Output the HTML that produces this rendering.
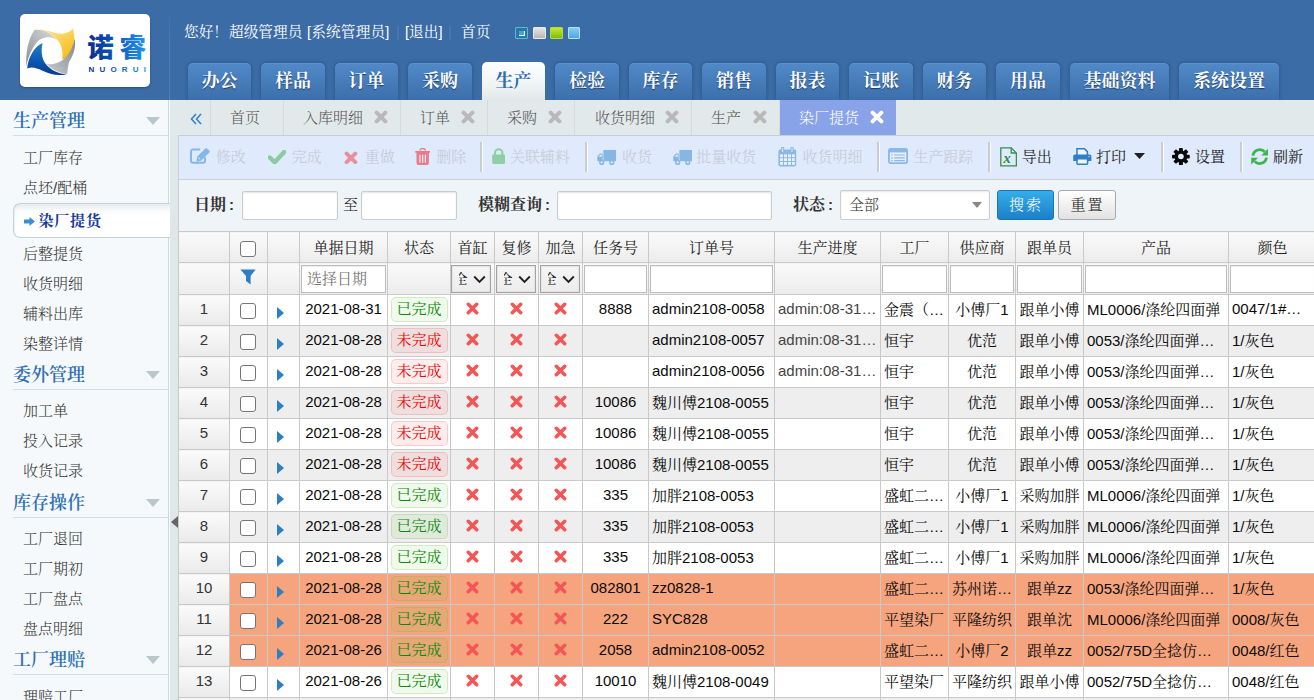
<!DOCTYPE html>
<html lang="zh-CN">
<head>
<meta charset="utf-8">
<title>染厂提货</title>
<style>
*{box-sizing:border-box;margin:0;padding:0}
html,body{width:1314px;height:700px;overflow:hidden;background:#f5f9fb}
body{position:relative;font-family:"Liberation Sans","Noto Serif CJK SC",serif;font-size:15px;color:#222;font-weight:300}
.abs{position:absolute}
/* ---------- header ---------- */
#hd{position:absolute;left:0;top:0;width:1314px;height:100px;background:#3b6ca5}
#logo{position:absolute;left:20px;top:14px;width:130px;height:73px;background:#fff;border-radius:5px;box-shadow:0 1px 2px rgba(20,50,90,.5)}
#vsep{position:absolute;left:169px;top:8px;width:1px;height:92px;background:linear-gradient(#3b6ca5,#4f7db2 40%,#4f7db2)}
#hello span{position:absolute;top:22px;height:20px;line-height:20px;color:#fff;white-space:nowrap;font-size:14.67px;font-weight:400}
#hello span.s{color:#4f7fb6}
.sk{position:absolute;top:27px;width:13px;height:12px;border:1px solid #7fb2dc;border-radius:1px}
.nt{position:absolute;top:63px;height:37px;line-height:37px;text-align:center;color:#fff;font-weight:bold;font-size:18px;
 border-radius:5px 5px 0 0;background:linear-gradient(#5189c8,#3c6faa);box-shadow:0 0 3px 1px rgba(38,80,135,.6),inset 0 1px 0 rgba(255,255,255,.08);text-shadow:0 1px 1px rgba(10,40,80,.8);white-space:nowrap;font-family:"Liberation Sans","Noto Serif CJK SC",serif}
.nt.on{top:62px;height:38px;line-height:39px;background:linear-gradient(#ffffff,#f3f6f7 50%,#e2e9ea);color:#2d6db5;text-shadow:none;box-shadow:none}
/* ---------- sidebar ---------- */
#sb{position:absolute;left:0;top:100px;width:170px;height:600px;background:#f5f9fb;overflow:hidden}
#sb:before{content:"";position:absolute;left:168px;top:0;width:1px;height:600px;background:#c9d7de}
#sb:after{content:"";position:absolute;left:169px;top:0;width:1px;height:600px;background:#fbfdfe}
#split{position:absolute;left:170px;top:100px;width:8px;height:600px;background:#dfe7e9}
.sh{position:relative;margin:1px 2px 0 13px;height:30px;line-height:31px;border-bottom:1px solid #d3dfe8;color:#2f6fb6;font-weight:600;font-size:18px;white-space:nowrap}
.sh:after{content:"";position:absolute;left:133px;top:11px;border:7px solid transparent;border-top:8px solid #b7c7cc;border-bottom:0}
.sl{padding-top:6px;list-style:none}
.sl.p7{padding-top:7px}
.sl li{height:30px;line-height:29px;padding-left:23px;color:#333;white-space:nowrap}
.sl li.on{height:35px;line-height:34px;margin:0 0 1px 13px;padding-left:10px;border:1px solid #c4d3dc;border-right:0;border-radius:7px 0 0 7px;background:linear-gradient(#e7ecef,#f7f9fa 6px,#fff 11px);position:relative;z-index:2;
 box-shadow:inset 1px 0 1px rgba(150,170,185,.2);color:#1b3a9c;font-weight:bold;letter-spacing:.8px}
/* ---------- tab bar ---------- */
#tb{position:absolute;left:179px;top:100px;width:1135px;height:35px;background:#e2e9ea}
.tab{position:absolute;top:0;height:35px;line-height:35px;color:#555;white-space:nowrap;border-right:1px solid #d6dbdb}
.tab b{position:absolute;top:10px;width:14px;height:14px}
.tab.on{background:#89a3e8;color:#fff;border-right:0}

/* ---------- main ---------- */
.tab b svg{display:block}
#tool{position:absolute;left:178px;top:135px;width:1136px;height:45px;background:#dfeafc;border-top:1px solid #c5cfd6;border-bottom:1px solid #cfcfcf;border-left:1px solid #c5cfd6}
.ti i{position:absolute;line-height:0}
.ti i svg{display:block}
.ti em{position:absolute;top:11px;line-height:20px;font-style:normal;white-space:nowrap;color:#222;font-weight:400}
.ti.dis em{font-weight:300}
.ti.dis i{opacity:.55}
.ti.dis em{color:#c3c9d3}
.tsep{position:absolute;top:6px;width:3px;height:30px;background:linear-gradient(90deg,#c9cdd3 0,#c9cdd3 1.6px,#fafcff 1.6px)}
#srch{position:absolute;left:178px;top:180px;width:1136px;height:51px;background:#eff4f9;border-left:1px solid #c5cfd6}
#srch label{position:absolute;top:15px;line-height:20px;font-weight:bold;font-size:16px;color:#333;white-space:nowrap}
#srch label u{text-decoration:none;margin-left:3px;font-size:15px}
.inp{position:absolute;top:11px;height:29px;background:#fff;border:1px solid #ccc;border-radius:2px;box-shadow:inset 0 1px 2px rgba(0,0,0,.1)}
.btn{position:absolute;top:10px;height:30px;line-height:28px;text-align:center;border-radius:3px;letter-spacing:2px;padding-left:1px;white-space:nowrap}
.b1{background:linear-gradient(#35aeea,#1c7fc8);border:1px solid #1b76b8;color:#fff}
.b2{background:linear-gradient(#ffffff,#e2e2e2);border:1px solid #a9a9a9;color:#222}
#grid{position:absolute;left:178px;top:231px;width:1136px;height:469px;overflow:hidden;background:#fff}
#grid table{border-collapse:collapse;table-layout:fixed;width:1198px}
#grid th,#grid td{border:1px solid #c9c9c9;padding:0 0 2px 0;text-align:center;white-space:nowrap;overflow:hidden;font-weight:400;vertical-align:middle;color:#0a0a0a}
#grid tr.h th{height:31px;background:linear-gradient(#fafafa,#ececec);color:#222}
#grid tr.f th{height:32px;padding-bottom:1px;background:linear-gradient(#fafafa,#ececec)}
#grid td{height:31px;padding-bottom:4px}
#grid td.l{text-align:left;padding-left:3px}
#grid td.g{color:#444}
#grid td.a{text-align:left;padding-left:9px}
#grid td.n{background:linear-gradient(#fbfbfb,#eaeaea) !important;color:#333}
tr.ev td{background:#eeeeee}
tr.hl td{background:#f5a47e}
.ck{display:inline-block;width:16px;height:16px;border:1.5px solid #767676;border-radius:3px;background:#fff;vertical-align:middle;position:relative;top:1.5px;left:-1px}
#grid tr.h .ck{top:1.5px}
.fi{display:block;margin:1px 1px 0 1px;height:28px;line-height:26px;border:1px solid #bdbdbd;background:#fff;box-shadow:inset 0 1px 1px rgba(0,0,0,.08)}
.fs{display:block;position:relative;margin:1px 0 0 0;width:40px;height:28px;border:1px solid #a3a3a3;background:linear-gradient(#f6f6f6,#ececec);box-shadow:inset 0 0 0 1px #e4e4e4}
.bd{position:relative;top:1.5px;display:inline-block;width:57px;height:25px;line-height:22px;border-radius:5px;border:1px solid;text-align:center;vertical-align:middle}
.bd.ok{color:#078a07;background:rgba(103,194,58,.1);border-color:rgba(103,194,58,.25)}
.bd.no{color:#f40000;background:rgba(245,108,108,.12);border-color:rgba(245,108,108,.28)}
</style>
</head>
<body>
<!-- HEADER -->
<div id="hd">
  <div id="logo">
    <svg width="130" height="73" viewBox="0 0 130 73">
      <defs>
        <linearGradient id="gy" x1="0" y1="0" x2="1" y2="1"><stop offset="0" stop-color="#fde9a8"/><stop offset=".55" stop-color="#fbd050"/><stop offset="1" stop-color="#f6b400"/></linearGradient>
        <linearGradient id="gb" x1="0" y1="0" x2="0" y2="1"><stop offset="0" stop-color="#1f7fd2"/><stop offset=".6" stop-color="#0b55ad"/><stop offset="1" stop-color="#073a8e"/></linearGradient>
        <linearGradient id="gg1" x1="0" y1="1" x2="1" y2="0"><stop offset="0" stop-color="#8b8f94"/><stop offset="1" stop-color="#d9dbde"/></linearGradient><linearGradient id="gg2" x1="0" y1="1" x2="1" y2="0"><stop offset="0" stop-color="#c9cccf"/><stop offset="1" stop-color="#84888d"/></linearGradient>
        <linearGradient id="gt" x1="0" y1="0" x2="1" y2="0"><stop offset="0" stop-color="#0d2b8e"/><stop offset=".5" stop-color="#0b5fc2"/><stop offset="1" stop-color="#2aa0ee"/></linearGradient>
      </defs>
      <path d="M6.3 52.5 C5.6 40 8 25 14.6 15.8 C22 15.2 30.5 18 36.8 25.8 C30 22 22.5 22.5 17.2 28 C12 34 8 43 6.3 52.5Z" fill="url(#gg1)"/>
      <path d="M14 14.6 C24 14.4 36 21 44 19.6 C48 19 51 17 52.7 14.8 C55.2 22 55 30.5 50 40 C48 43.2 45 45 42.2 45.6 C43.2 38 42 31 37 25.6 C31 18.5 22 15.4 14 14.6Z" fill="url(#gy)"/>
      <path d="M54.6 24.5 C56.2 32 54 40.5 49 48 C48 52 47.5 56 47.2 60.2 C40 59.2 32 56 26.6 50 C32 51 38 49.4 43 45.8 C49 41.2 53.2 33 54.6 24.5Z" fill="url(#gg2)"/>
      <path d="M22.6 29 C14 33 8.3 43 7.2 54.4 C12 52.4 17 54 22 56.6 C29 60.2 38 62.2 46.4 60.4 C38 59.6 30 56 25 49 C21.4 43.5 21 36 22.6 29Z" fill="url(#gb)"/>
      <text x="67.3" y="43.2" font-size="26.5" font-weight="900" fill="url(#gt)" font-family="'Liberation Sans','Noto Sans CJK SC',sans-serif" letter-spacing="5.6">诺睿</text>
      <text x="68.6" y="57.5" font-size="8" font-weight="bold" fill="url(#gt)" font-family="'Liberation Sans',sans-serif" letter-spacing="5.15">NUORUI</text>
    </svg>
  </div>
  <div id="vsep"></div>
  <div id="hello"><span style="left:184px">您好！</span><span style="left:229px">超级管理员</span><span style="left:307px;letter-spacing:.15px">[系统管理员]</span><span class="s" style="left:396px">|</span><span style="left:405px">[退出]</span><span class="s" style="left:448px">|</span><span style="left:461px">首页</span></div>
  <div class="sk" style="left:515px;background:#217ba7;border-color:#6cb2cf"><span style="position:absolute;left:3px;top:3px;width:6px;height:5px;background:#4aa3d6;border-right:1px solid #fff;border-bottom:1px solid #fff"></span></div>
  <div class="sk" style="left:533px;background:linear-gradient(#e6e6e6,#b9b9b9);border-color:#ecebe8"></div>
  <div class="sk" style="left:550px;background:linear-gradient(#c6ea2c,#7dbd0a);border-color:#b4dc3a"></div>
  <div class="sk" style="left:568px;width:12px;background:linear-gradient(#82cdf6,#4ea6e6);border-color:#b5e2fa"></div>

  <div class="nt" style="left:188px;width:63px">办公</div>
  <div class="nt" style="left:261px;width:64px">样品</div>
  <div class="nt" style="left:335px;width:63px">订单</div>
  <div class="nt" style="left:408px;width:64px">采购</div>
  <div class="nt on" style="left:482px;width:63px">生产</div>
  <div class="nt" style="left:555px;width:64px">检验</div>
  <div class="nt" style="left:629px;width:63px">库存</div>
  <div class="nt" style="left:702px;width:64px">销售</div>
  <div class="nt" style="left:776px;width:63px">报表</div>
  <div class="nt" style="left:849px;width:64px">记账</div>
  <div class="nt" style="left:923px;width:63px">财务</div>
  <div class="nt" style="left:996px;width:64px">用品</div>
  <div class="nt" style="left:1070px;width:99px">基础资料</div>
  <div class="nt" style="left:1179px;width:100px">系统设置</div>
</div>

<!-- SIDEBAR -->
<div id="sb">
  <div class="sh" style="margin-top:6px">生产管理</div>
  <ul class="sl p7">
    <li>工厂库存</li><li>点坯/配桶</li>
    <li class="on"><svg width="11" height="9" viewBox="0 0 11 9" style="margin-right:3.5px;vertical-align:0"><path d="M0 2.5h5.5V0L11 4.5 5.5 9V6.5H0z" fill="#3d8fd4"/></svg>染厂提货</li>
    <li>后整提货</li><li>收货明细</li><li>辅料出库</li><li>染整详情</li>
  </ul>
  <div class="sh">委外管理</div>
  <ul class="sl"><li>加工单</li><li>投入记录</li><li>收货记录</li></ul>
  <div class="sh" style="margin-top:2px">库存操作</div>
  <ul class="sl"><li>工厂退回</li><li>工厂期初</li><li>工厂盘点</li><li>盘点明细</li></ul>
  <div class="sh">工厂理赔</div>
  <ul class="sl p7"><li>理赔工厂</li></ul>
</div>
<div id="split"><svg class="abs" style="left:1px;top:416px" width="7" height="12" viewBox="0 0 7 12"><path d="M7 0v12L0 6z" fill="#666"/></svg></div>

<!-- TAB BAR -->
<div class="abs" style="left:170px;top:100px;width:9px;height:35px;background:#e2e9ea"></div>
<div id="tb">
  <div class="tab" style="left:0;width:32px"><svg class="abs" style="left:11px;top:13px" width="12" height="12" viewBox="0 0 12 12"><path d="M6 1L1.5 6 6 11M11 1L6.5 6 11 11" fill="none" stroke="#3a7fc4" stroke-width="1.6"/></svg></div>
  <div class="tab" style="left:32px;width:73px"><span class="abs" style="left:19px;top:0">首页</span></div>
  <div class="tab" style="left:105px;width:117px"><span class="abs" style="left:19px;top:0">入库明细</span><b style="left:90px"><svg class="cx" width="14" height="14" viewBox="0 0 14 14"><path d="M2.6 2.6l8.8 8.8M11.4 2.6l-8.8 8.8" stroke="#b9b9b9" stroke-width="4" stroke-linecap="round" fill="none"/></svg></b></div>
  <div class="tab" style="left:222px;width:87px"><span class="abs" style="left:19px;top:0">订单</span><b style="left:60px"><svg class="cx" width="14" height="14" viewBox="0 0 14 14"><path d="M2.6 2.6l8.8 8.8M11.4 2.6l-8.8 8.8" stroke="#b9b9b9" stroke-width="4" stroke-linecap="round" fill="none"/></svg></b></div>
  <div class="tab" style="left:309px;width:87px"><span class="abs" style="left:19px;top:0">采购</span><b style="left:60px"><svg class="cx" width="14" height="14" viewBox="0 0 14 14"><path d="M2.6 2.6l8.8 8.8M11.4 2.6l-8.8 8.8" stroke="#b9b9b9" stroke-width="4" stroke-linecap="round" fill="none"/></svg></b></div>
  <div class="tab" style="left:396px;width:117px"><span class="abs" style="left:20px;top:0">收货明细</span><b style="left:90px"><svg class="cx" width="14" height="14" viewBox="0 0 14 14"><path d="M2.6 2.6l8.8 8.8M11.4 2.6l-8.8 8.8" stroke="#b9b9b9" stroke-width="4" stroke-linecap="round" fill="none"/></svg></b></div>
  <div class="tab" style="left:513px;width:88px"><span class="abs" style="left:19px;top:0">生产</span><b style="left:61px"><svg class="cx" width="14" height="14" viewBox="0 0 14 14"><path d="M2.6 2.6l8.8 8.8M11.4 2.6l-8.8 8.8" stroke="#b9b9b9" stroke-width="4" stroke-linecap="round" fill="none"/></svg></b></div>
  <div class="tab on" style="left:601px;width:116px"><span class="abs" style="left:19px;top:0">染厂提货</span><b style="left:90px"><svg class="cx" width="14" height="14" viewBox="0 0 14 14"><path d="M2.6 2.6l8.8 8.8M11.4 2.6l-8.8 8.8" stroke="#fff" stroke-width="4" stroke-linecap="round" fill="none"/></svg></b></div>
</div>

<div id="tool">
<span class="ti dis"><i style="left:11.0px;top:12.0px"><svg width="20.0" height="15.8" viewBox="0 0 20 16" preserveAspectRatio="none"><path d="M15 9.3v3.7a2 2 0 0 1-2 2H3a2 2 0 0 1-2-2V3.6a2 2 0 0 1 2-2h7.2" fill="none" stroke="#3f8fd8" stroke-width="2"/><path d="M7 8.8L15.3 0.5a1.2 1.2 0 0 1 1.7 0L19.4 2.9a1.2 1.2 0 0 1 0 1.7L11.1 12.9l-4.6 1z" fill="#3f8fd8"/><path d="M8.2 9.6l2 2" stroke="#dfeafc" stroke-width="1"/></svg></i><em style="left:36.7px">修改</em></span>
<span class="ti dis"><i style="left:88.6px;top:14.2px"><svg width="18.0" height="13.9" viewBox="0 0 18 14" preserveAspectRatio="none"><path d="M1.8 7.6l4.9 4.7L16.2 2" fill="none" stroke="#45b256" stroke-width="4.4" stroke-linejoin="round" stroke-linecap="round"/></svg></i><em style="left:112.8px">完成</em></span>
<span class="ti dis"><i style="left:164.8px;top:14.7px"><svg width="13.9" height="13.7" viewBox="0 0 14 14" preserveAspectRatio="none"><path d="M2.6 2.6l8.8 8.8M11.4 2.6l-8.8 8.8" stroke="#ef4650" stroke-width="3.9" stroke-linecap="round" fill="none"/></svg></i><em style="left:185.7px">重做</em></span>
<span class="ti dis"><i style="left:235.9px;top:12.0px"><svg width="15.4" height="17.2" viewBox="0 0 15.4 17.2" preserveAspectRatio="none"><path d="M0.3 3h14.8v1.8H0.3z" fill="#f5222d"/><path d="M5 2.6c0-2.7 5.4-2.7 5.4 0" fill="none" stroke="#f5222d" stroke-width="1.5"/><path d="M1.5 4h12.4v11a2 2 0 0 1-2 2H3.5a2 2 0 0 1-2-2z" fill="#f5222d"/><path d="M5 6.8v8M7.7 6.8v8M10.4 6.8v8" stroke="#dfeafc" stroke-width="1.25"/></svg></i><em style="left:257.2px">删除</em></span>
<span class="ti dis"><i style="left:312.6px;top:12.0px"><svg width="13.4" height="16.0" viewBox="0 0 13.4 16" preserveAspectRatio="none"><path d="M3 7V5a3.7 3.7 0 0 1 7.4 0V7" fill="none" stroke="#4cbb5c" stroke-width="2.1"/><rect x="0.2" y="6.6" width="13" height="9.3" rx="1.3" fill="#4cbb5c"/></svg></i><em style="left:330.8px">关联辅料</em></span>
<span class="ti dis"><i style="left:417.6px;top:13.8px"><svg width="19.4" height="15.4" viewBox="0 0 19.4 15.4" preserveAspectRatio="none"><path d="M6.4 0h13v11.2H6.4z" fill="#3f8fd0"/><path d="M5.7 3.4H3.4C2.5 3.4 0.3 6 0.3 7.2v4H5.7z" fill="#3f8fd0"/><path d="M1.6 6.8L3.2 4.8H4.8V6.8z" fill="#dfeafc"/><circle cx="4.7" cy="12.4" r="2.6" fill="#3f8fd0"/><circle cx="4.7" cy="12.4" r="1.15" fill="#dfeafc"/><circle cx="14.8" cy="12.4" r="2.6" fill="#3f8fd0"/><circle cx="14.8" cy="12.4" r="1.15" fill="#dfeafc"/></svg></i><em style="left:442.9px">收货</em></span>
<span class="ti dis"><i style="left:493.8px;top:13.8px"><svg width="19.4" height="15.4" viewBox="0 0 19.4 15.4" preserveAspectRatio="none"><path d="M6.4 0h13v11.2H6.4z" fill="#3f8fd0"/><path d="M5.7 3.4H3.4C2.5 3.4 0.3 6 0.3 7.2v4H5.7z" fill="#3f8fd0"/><path d="M1.6 6.8L3.2 4.8H4.8V6.8z" fill="#dfeafc"/><circle cx="4.7" cy="12.4" r="2.6" fill="#3f8fd0"/><circle cx="4.7" cy="12.4" r="1.15" fill="#dfeafc"/><circle cx="14.8" cy="12.4" r="2.6" fill="#3f8fd0"/><circle cx="14.8" cy="12.4" r="1.15" fill="#dfeafc"/></svg></i><em style="left:517.2px">批量收货</em></span>
<span class="ti dis"><i style="left:599.2px;top:11.0px"><svg width="18.6" height="19.8" viewBox="0 0 18.6 19.8" preserveAspectRatio="none"><rect x="0.4" y="2.6" width="17.8" height="16.8" rx="1.8" fill="#4a90d2"/><path d="M4.6 0.4v5M14 0.4v5" stroke="#4a90d2" stroke-width="3.2" stroke-linecap="round"/><path d="M4.6 1.2v3.4M14 1.2v3.4" stroke="#dfeafc" stroke-width="1" stroke-linecap="round"/><g fill="#f3f8ff"><rect x="2" y="7.4" width="3" height="2.8"/><rect x="6" y="7.4" width="3" height="2.8"/><rect x="10" y="7.4" width="3" height="2.8"/><rect x="14" y="7.4" width="2.8" height="2.8"/><rect x="2" y="11.2" width="3" height="2.8"/><rect x="6" y="11.2" width="3" height="2.8"/><rect x="10" y="11.2" width="3" height="2.8"/><rect x="14" y="11.2" width="2.8" height="2.8"/><rect x="2" y="15" width="3" height="2.8"/><rect x="6" y="15" width="3" height="2.8"/><rect x="10" y="15" width="3" height="2.8"/><rect x="14" y="15" width="2.8" height="2.8"/></g></svg></i><em style="left:623.6px">收货明细</em></span>
<span class="ti dis"><i style="left:709.0px;top:12.0px"><svg width="20.0" height="16.0" viewBox="0 0 20 16" preserveAspectRatio="none"><rect x="0.9" y="0.9" width="18.2" height="14.2" rx="1.8" fill="#eaf3fd" stroke="#4a90d2" stroke-width="1.8"/><path d="M1 1.2h18v3.2H1z" fill="#4a90d2"/><path d="M3.2 7h1.6M6.2 7h10.6M3.2 9.8h1.6M6.2 9.8h10.6M3.2 12.6h1.6M6.2 12.6h10.6" stroke="#4a90d2" stroke-width="1.2"/></svg></i><em style="left:734.2px">生产跟踪</em></span>
<span class="ti"><i style="left:820.6px;top:11.0px"><svg width="17.2" height="19.6" viewBox="0 0 17.2 19.6" preserveAspectRatio="none"><path d="M0.8 0.8h10.4l5.2 5.2v12.8H0.8z" fill="none" stroke="#3c8d4e" stroke-width="1.3"/><path d="M11.2 0.8V6h5.2" fill="none" stroke="#3c8d4e" stroke-width="1.3"/><text x="3.6" y="16.4" font-family="Liberation Serif,serif" font-weight="bold" font-size="14.5" fill="#2e8b3d">x</text></svg></i><em style="left:842.8px">导出</em></span>
<span class="ti"><i style="left:894.0px;top:12.0px"><svg width="18.6" height="17.0" viewBox="0 0 18.6 17" preserveAspectRatio="none"><path d="M4 0.8h7.4l3 2.8V8H4z" fill="#eef5fe" stroke="#2f7fc8" stroke-width="1.5"/><path d="M1.8 6.6h15a1.6 1.6 0 0 1 1.6 1.6V13H0.2V8.2a1.6 1.6 0 0 1 1.6-1.6z" fill="#2f7fc8"/><rect x="4" y="10.8" width="10.6" height="5.4" rx="1" fill="#eef5fe" stroke="#2f7fc8" stroke-width="1.5"/><circle cx="16" cy="8.6" r=".7" fill="#dfeafc"/></svg></i><em style="left:917.0px">打印</em></span>
<span class="ti"><i style="left:993.3px;top:12.0px"><svg width="17.8" height="17.2" viewBox="0 0 18 18" preserveAspectRatio="none"><g fill="#0a0a0a"><circle cx="9" cy="9" r="6.4"/><rect x="7" y="0" width="4" height="18" rx="1"/><rect x="7" y="0" width="4" height="18" rx="1" transform="rotate(45 9 9)"/><rect x="7" y="0" width="4" height="18" rx="1" transform="rotate(90 9 9)"/><rect x="7" y="0" width="4" height="18" rx="1" transform="rotate(135 9 9)"/></g><circle cx="9" cy="9" r="2.9" fill="#dfeafc"/></svg></i><em style="left:1016.0px">设置</em></span>
<span class="ti"><i style="left:1071.8px;top:12.0px"><svg width="17.4" height="17.2" viewBox="0 0 18 18" preserveAspectRatio="none"><path d="M2 8A7.1 7.1 0 0 1 14.2 4" fill="none" stroke="#3db54a" stroke-width="2.9"/><path d="M17.8 0.6v7.2h-7.2z" fill="#3db54a"/><path d="M16 10A7.1 7.1 0 0 1 3.8 14" fill="none" stroke="#3db54a" stroke-width="2.9"/><path d="M0.2 17.4v-7.2h7.2z" fill="#3db54a"/></svg></i><em style="left:1093.9px">刷新</em></span>
<span class="tsep" style="left:300.8px"></span>
<span class="tsep" style="left:405.9px"></span>
<span class="tsep" style="left:698.0px"></span>
<span class="tsep" style="left:809.0px"></span>
<span class="tsep" style="left:982.2px"></span>
<span class="tsep" style="left:1061.0px"></span>
<svg class="abs" style="left:955px;top:17px" width="11" height="6" viewBox="0 0 11 6"><path d="M0 0h11L5.5 6z" fill="#222"/></svg>
</div>
<div id="srch">
<label style="left:15px">日期<u>:</u></label><span class="inp" style="left:63px;width:96px"></span><span class="abs" style="left:164px;top:15px;line-height:20px">至</span><span class="inp" style="left:182px;width:96px"></span>
<label style="left:299px">模糊查询<u>:</u></label><span class="inp" style="left:378px;width:215px"></span>
<label style="left:614px">状态<u>:</u></label><span class="inp" style="left:661px;width:150px;top:10px;height:30px;padding-left:8px;line-height:28px;color:#333">全部<svg class="abs" style="right:7px;top:11px" width="10" height="6" viewBox="0 0 10 6"><path d="M0 0h10L5 6z" fill="#888"/></svg></span>
<span class="btn b1" style="left:818px;width:57px">搜索</span><span class="btn b2" style="left:879px;width:58px">重置</span>
</div>
<div id="grid"><table><colgroup><col style="width:51px"><col style="width:38px"><col style="width:32px"><col style="width:88px"><col style="width:63px"><col style="width:44px"><col style="width:44px"><col style="width:44px"><col style="width:66px"><col style="width:126px"><col style="width:106px"><col style="width:68px"><col style="width:67px"><col style="width:68px"><col style="width:145px"><col style="width:88px"><col style="width:60px"></colgroup>
<tr class="h"><th></th><th><span class="ck"></span></th><th></th><th>单据日期</th><th>状态</th><th>首缸</th><th>复修</th><th>加急</th><th>任务号</th><th>订单号</th><th>生产进度</th><th>工厂</th><th>供应商</th><th>跟单员</th><th>产品</th><th>颜色</th><th></th></tr>
<tr class="f"><th></th><th><svg width="16" height="16" viewBox="0 0 16 16" style="vertical-align:-2px;position:relative;left:-.5px;top:-1px"><path d="M0.4 0.6h15.2L10.6 7v8.6L6 12V7z" fill="#2b7fc3"/></svg></th><th></th><th><span class="fi" style="color:#777;padding-left:5px;text-align:left">选择日期</span></th><th></th><th><span class="fs"><span class="abs" style="left:7px;top:5px;font-size:13px;line-height:16px;width:9px;height:16px;overflow:hidden;white-space:nowrap"><span style="margin-left:-5px">全</span></span><svg class="abs" style="left:21px;top:9px" width="13" height="9" viewBox="0 0 13 9"><path d="M1.2 1.5l5.3 5.3 5.3-5.3" fill="none" stroke="#222" stroke-width="1.9"/></svg></span></th><th><span class="fs" style="margin-left:1px"><span class="abs" style="left:7px;top:5px;font-size:13px;line-height:16px;width:9px;height:16px;overflow:hidden;white-space:nowrap"><span style="margin-left:-5px">全</span></span><svg class="abs" style="left:21px;top:9px" width="13" height="9" viewBox="0 0 13 9"><path d="M1.2 1.5l5.3 5.3 5.3-5.3" fill="none" stroke="#222" stroke-width="1.9"/></svg></span></th><th><span class="fs" style="margin-left:1px"><span class="abs" style="left:7px;top:5px;font-size:13px;line-height:16px;width:9px;height:16px;overflow:hidden;white-space:nowrap"><span style="margin-left:-5px">全</span></span><svg class="abs" style="left:21px;top:9px" width="13" height="9" viewBox="0 0 13 9"><path d="M1.2 1.5l5.3 5.3 5.3-5.3" fill="none" stroke="#222" stroke-width="1.9"/></svg></span></th><th><span class="fi"></span></th><th><span class="fi"></span></th><th></th><th><span class="fi"></span></th><th><span class="fi"></span></th><th><span class="fi"></span></th><th><span class="fi"></span></th><th><span class="fi"></span></th><th></th></tr>
<tr class="od"><td class="n">1</td><td><span class="ck"></span></td><td class="a"><svg width="7" height="12" viewBox="0 0 7 12" style="vertical-align:-7px"><path d="M0 0l7 6-7 6z" fill="#2b7fc3"/></svg></td><td>2021-08-31</td><td><span class="bd ok">已完成</span></td><td><svg width="13" height="13" viewBox="0 0 13 13" style="vertical-align:-1.5px"><path d="M2.3 2.3l8.4 8.4M10.7 2.3l-8.4 8.4" stroke="#f55555" stroke-width="3.5" stroke-linecap="round" fill="none"/></svg></td><td><svg width="13" height="13" viewBox="0 0 13 13" style="vertical-align:-1.5px"><path d="M2.3 2.3l8.4 8.4M10.7 2.3l-8.4 8.4" stroke="#f55555" stroke-width="3.5" stroke-linecap="round" fill="none"/></svg></td><td><svg width="13" height="13" viewBox="0 0 13 13" style="vertical-align:-1.5px"><path d="M2.3 2.3l8.4 8.4M10.7 2.3l-8.4 8.4" stroke="#f55555" stroke-width="3.5" stroke-linecap="round" fill="none"/></svg></td><td>8888</td><td class="l">admin2108-0058</td><td class="l g">admin:08-31…</td><td class="l">金震（…</td><td>小傅厂1</td><td>跟单小傅</td><td class="l">ML0006/涤纶四面弹</td><td class="l">0047/1#…</td><td></td></tr>
<tr class="ev"><td class="n">2</td><td><span class="ck"></span></td><td class="a"><svg width="7" height="12" viewBox="0 0 7 12" style="vertical-align:-7px"><path d="M0 0l7 6-7 6z" fill="#2b7fc3"/></svg></td><td>2021-08-28</td><td><span class="bd no">未完成</span></td><td><svg width="13" height="13" viewBox="0 0 13 13" style="vertical-align:-1.5px"><path d="M2.3 2.3l8.4 8.4M10.7 2.3l-8.4 8.4" stroke="#f55555" stroke-width="3.5" stroke-linecap="round" fill="none"/></svg></td><td><svg width="13" height="13" viewBox="0 0 13 13" style="vertical-align:-1.5px"><path d="M2.3 2.3l8.4 8.4M10.7 2.3l-8.4 8.4" stroke="#f55555" stroke-width="3.5" stroke-linecap="round" fill="none"/></svg></td><td><svg width="13" height="13" viewBox="0 0 13 13" style="vertical-align:-1.5px"><path d="M2.3 2.3l8.4 8.4M10.7 2.3l-8.4 8.4" stroke="#f55555" stroke-width="3.5" stroke-linecap="round" fill="none"/></svg></td><td></td><td class="l">admin2108-0057</td><td class="l g">admin:08-31…</td><td class="l">恒宇</td><td>优范</td><td>跟单小傅</td><td class="l">0053/涤纶四面弹…</td><td class="l">1/灰色</td><td></td></tr>
<tr class="od"><td class="n">3</td><td><span class="ck"></span></td><td class="a"><svg width="7" height="12" viewBox="0 0 7 12" style="vertical-align:-7px"><path d="M0 0l7 6-7 6z" fill="#2b7fc3"/></svg></td><td>2021-08-28</td><td><span class="bd no">未完成</span></td><td><svg width="13" height="13" viewBox="0 0 13 13" style="vertical-align:-1.5px"><path d="M2.3 2.3l8.4 8.4M10.7 2.3l-8.4 8.4" stroke="#f55555" stroke-width="3.5" stroke-linecap="round" fill="none"/></svg></td><td><svg width="13" height="13" viewBox="0 0 13 13" style="vertical-align:-1.5px"><path d="M2.3 2.3l8.4 8.4M10.7 2.3l-8.4 8.4" stroke="#f55555" stroke-width="3.5" stroke-linecap="round" fill="none"/></svg></td><td><svg width="13" height="13" viewBox="0 0 13 13" style="vertical-align:-1.5px"><path d="M2.3 2.3l8.4 8.4M10.7 2.3l-8.4 8.4" stroke="#f55555" stroke-width="3.5" stroke-linecap="round" fill="none"/></svg></td><td></td><td class="l">admin2108-0056</td><td class="l g">admin:08-31…</td><td class="l">恒宇</td><td>优范</td><td>跟单小傅</td><td class="l">0053/涤纶四面弹…</td><td class="l">1/灰色</td><td></td></tr>
<tr class="ev"><td class="n">4</td><td><span class="ck"></span></td><td class="a"><svg width="7" height="12" viewBox="0 0 7 12" style="vertical-align:-7px"><path d="M0 0l7 6-7 6z" fill="#2b7fc3"/></svg></td><td>2021-08-28</td><td><span class="bd no">未完成</span></td><td><svg width="13" height="13" viewBox="0 0 13 13" style="vertical-align:-1.5px"><path d="M2.3 2.3l8.4 8.4M10.7 2.3l-8.4 8.4" stroke="#f55555" stroke-width="3.5" stroke-linecap="round" fill="none"/></svg></td><td><svg width="13" height="13" viewBox="0 0 13 13" style="vertical-align:-1.5px"><path d="M2.3 2.3l8.4 8.4M10.7 2.3l-8.4 8.4" stroke="#f55555" stroke-width="3.5" stroke-linecap="round" fill="none"/></svg></td><td><svg width="13" height="13" viewBox="0 0 13 13" style="vertical-align:-1.5px"><path d="M2.3 2.3l8.4 8.4M10.7 2.3l-8.4 8.4" stroke="#f55555" stroke-width="3.5" stroke-linecap="round" fill="none"/></svg></td><td>10086</td><td class="l">魏川傅2108-0055</td><td class="l g"></td><td class="l">恒宇</td><td>优范</td><td>跟单小傅</td><td class="l">0053/涤纶四面弹…</td><td class="l">1/灰色</td><td></td></tr>
<tr class="od"><td class="n">5</td><td><span class="ck"></span></td><td class="a"><svg width="7" height="12" viewBox="0 0 7 12" style="vertical-align:-7px"><path d="M0 0l7 6-7 6z" fill="#2b7fc3"/></svg></td><td>2021-08-28</td><td><span class="bd no">未完成</span></td><td><svg width="13" height="13" viewBox="0 0 13 13" style="vertical-align:-1.5px"><path d="M2.3 2.3l8.4 8.4M10.7 2.3l-8.4 8.4" stroke="#f55555" stroke-width="3.5" stroke-linecap="round" fill="none"/></svg></td><td><svg width="13" height="13" viewBox="0 0 13 13" style="vertical-align:-1.5px"><path d="M2.3 2.3l8.4 8.4M10.7 2.3l-8.4 8.4" stroke="#f55555" stroke-width="3.5" stroke-linecap="round" fill="none"/></svg></td><td><svg width="13" height="13" viewBox="0 0 13 13" style="vertical-align:-1.5px"><path d="M2.3 2.3l8.4 8.4M10.7 2.3l-8.4 8.4" stroke="#f55555" stroke-width="3.5" stroke-linecap="round" fill="none"/></svg></td><td>10086</td><td class="l">魏川傅2108-0055</td><td class="l g"></td><td class="l">恒宇</td><td>优范</td><td>跟单小傅</td><td class="l">0053/涤纶四面弹…</td><td class="l">1/灰色</td><td></td></tr>
<tr class="ev"><td class="n">6</td><td><span class="ck"></span></td><td class="a"><svg width="7" height="12" viewBox="0 0 7 12" style="vertical-align:-7px"><path d="M0 0l7 6-7 6z" fill="#2b7fc3"/></svg></td><td>2021-08-28</td><td><span class="bd no">未完成</span></td><td><svg width="13" height="13" viewBox="0 0 13 13" style="vertical-align:-1.5px"><path d="M2.3 2.3l8.4 8.4M10.7 2.3l-8.4 8.4" stroke="#f55555" stroke-width="3.5" stroke-linecap="round" fill="none"/></svg></td><td><svg width="13" height="13" viewBox="0 0 13 13" style="vertical-align:-1.5px"><path d="M2.3 2.3l8.4 8.4M10.7 2.3l-8.4 8.4" stroke="#f55555" stroke-width="3.5" stroke-linecap="round" fill="none"/></svg></td><td><svg width="13" height="13" viewBox="0 0 13 13" style="vertical-align:-1.5px"><path d="M2.3 2.3l8.4 8.4M10.7 2.3l-8.4 8.4" stroke="#f55555" stroke-width="3.5" stroke-linecap="round" fill="none"/></svg></td><td>10086</td><td class="l">魏川傅2108-0055</td><td class="l g"></td><td class="l">恒宇</td><td>优范</td><td>跟单小傅</td><td class="l">0053/涤纶四面弹…</td><td class="l">1/灰色</td><td></td></tr>
<tr class="od"><td class="n">7</td><td><span class="ck"></span></td><td class="a"><svg width="7" height="12" viewBox="0 0 7 12" style="vertical-align:-7px"><path d="M0 0l7 6-7 6z" fill="#2b7fc3"/></svg></td><td>2021-08-28</td><td><span class="bd ok">已完成</span></td><td><svg width="13" height="13" viewBox="0 0 13 13" style="vertical-align:-1.5px"><path d="M2.3 2.3l8.4 8.4M10.7 2.3l-8.4 8.4" stroke="#f55555" stroke-width="3.5" stroke-linecap="round" fill="none"/></svg></td><td><svg width="13" height="13" viewBox="0 0 13 13" style="vertical-align:-1.5px"><path d="M2.3 2.3l8.4 8.4M10.7 2.3l-8.4 8.4" stroke="#f55555" stroke-width="3.5" stroke-linecap="round" fill="none"/></svg></td><td><svg width="13" height="13" viewBox="0 0 13 13" style="vertical-align:-1.5px"><path d="M2.3 2.3l8.4 8.4M10.7 2.3l-8.4 8.4" stroke="#f55555" stroke-width="3.5" stroke-linecap="round" fill="none"/></svg></td><td>335</td><td class="l">加胖2108-0053</td><td class="l g"></td><td class="l">盛虹二…</td><td>小傅厂1</td><td>采购加胖</td><td class="l">ML0006/涤纶四面弹</td><td class="l">1/灰色</td><td></td></tr>
<tr class="ev"><td class="n">8</td><td><span class="ck"></span></td><td class="a"><svg width="7" height="12" viewBox="0 0 7 12" style="vertical-align:-7px"><path d="M0 0l7 6-7 6z" fill="#2b7fc3"/></svg></td><td>2021-08-28</td><td><span class="bd ok">已完成</span></td><td><svg width="13" height="13" viewBox="0 0 13 13" style="vertical-align:-1.5px"><path d="M2.3 2.3l8.4 8.4M10.7 2.3l-8.4 8.4" stroke="#f55555" stroke-width="3.5" stroke-linecap="round" fill="none"/></svg></td><td><svg width="13" height="13" viewBox="0 0 13 13" style="vertical-align:-1.5px"><path d="M2.3 2.3l8.4 8.4M10.7 2.3l-8.4 8.4" stroke="#f55555" stroke-width="3.5" stroke-linecap="round" fill="none"/></svg></td><td><svg width="13" height="13" viewBox="0 0 13 13" style="vertical-align:-1.5px"><path d="M2.3 2.3l8.4 8.4M10.7 2.3l-8.4 8.4" stroke="#f55555" stroke-width="3.5" stroke-linecap="round" fill="none"/></svg></td><td>335</td><td class="l">加胖2108-0053</td><td class="l g"></td><td class="l">盛虹二…</td><td>小傅厂1</td><td>采购加胖</td><td class="l">ML0006/涤纶四面弹</td><td class="l">1/灰色</td><td></td></tr>
<tr class="od"><td class="n">9</td><td><span class="ck"></span></td><td class="a"><svg width="7" height="12" viewBox="0 0 7 12" style="vertical-align:-7px"><path d="M0 0l7 6-7 6z" fill="#2b7fc3"/></svg></td><td>2021-08-28</td><td><span class="bd ok">已完成</span></td><td><svg width="13" height="13" viewBox="0 0 13 13" style="vertical-align:-1.5px"><path d="M2.3 2.3l8.4 8.4M10.7 2.3l-8.4 8.4" stroke="#f55555" stroke-width="3.5" stroke-linecap="round" fill="none"/></svg></td><td><svg width="13" height="13" viewBox="0 0 13 13" style="vertical-align:-1.5px"><path d="M2.3 2.3l8.4 8.4M10.7 2.3l-8.4 8.4" stroke="#f55555" stroke-width="3.5" stroke-linecap="round" fill="none"/></svg></td><td><svg width="13" height="13" viewBox="0 0 13 13" style="vertical-align:-1.5px"><path d="M2.3 2.3l8.4 8.4M10.7 2.3l-8.4 8.4" stroke="#f55555" stroke-width="3.5" stroke-linecap="round" fill="none"/></svg></td><td>335</td><td class="l">加胖2108-0053</td><td class="l g"></td><td class="l">盛虹二…</td><td>小傅厂1</td><td>采购加胖</td><td class="l">ML0006/涤纶四面弹</td><td class="l">1/灰色</td><td></td></tr>
<tr class="hl"><td class="n">10</td><td><span class="ck"></span></td><td class="a"><svg width="7" height="12" viewBox="0 0 7 12" style="vertical-align:-7px"><path d="M0 0l7 6-7 6z" fill="#2b7fc3"/></svg></td><td>2021-08-28</td><td><span class="bd ok">已完成</span></td><td><svg width="13" height="13" viewBox="0 0 13 13" style="vertical-align:-1.5px"><path d="M2.3 2.3l8.4 8.4M10.7 2.3l-8.4 8.4" stroke="#f55555" stroke-width="3.5" stroke-linecap="round" fill="none"/></svg></td><td><svg width="13" height="13" viewBox="0 0 13 13" style="vertical-align:-1.5px"><path d="M2.3 2.3l8.4 8.4M10.7 2.3l-8.4 8.4" stroke="#f55555" stroke-width="3.5" stroke-linecap="round" fill="none"/></svg></td><td><svg width="13" height="13" viewBox="0 0 13 13" style="vertical-align:-1.5px"><path d="M2.3 2.3l8.4 8.4M10.7 2.3l-8.4 8.4" stroke="#f55555" stroke-width="3.5" stroke-linecap="round" fill="none"/></svg></td><td>082801</td><td class="l">zz0828-1</td><td class="l g"></td><td class="l">盛虹二…</td><td>苏州诺…</td><td>跟单zz</td><td class="l">0053/涤纶四面弹…</td><td class="l">1/灰色</td><td></td></tr>
<tr class="hl"><td class="n">11</td><td><span class="ck"></span></td><td class="a"><svg width="7" height="12" viewBox="0 0 7 12" style="vertical-align:-7px"><path d="M0 0l7 6-7 6z" fill="#2b7fc3"/></svg></td><td>2021-08-28</td><td><span class="bd ok">已完成</span></td><td><svg width="13" height="13" viewBox="0 0 13 13" style="vertical-align:-1.5px"><path d="M2.3 2.3l8.4 8.4M10.7 2.3l-8.4 8.4" stroke="#f55555" stroke-width="3.5" stroke-linecap="round" fill="none"/></svg></td><td><svg width="13" height="13" viewBox="0 0 13 13" style="vertical-align:-1.5px"><path d="M2.3 2.3l8.4 8.4M10.7 2.3l-8.4 8.4" stroke="#f55555" stroke-width="3.5" stroke-linecap="round" fill="none"/></svg></td><td><svg width="13" height="13" viewBox="0 0 13 13" style="vertical-align:-1.5px"><path d="M2.3 2.3l8.4 8.4M10.7 2.3l-8.4 8.4" stroke="#f55555" stroke-width="3.5" stroke-linecap="round" fill="none"/></svg></td><td>222</td><td class="l">SYC828</td><td class="l g"></td><td class="l">平望染厂</td><td>平隆纺织</td><td>跟单沈</td><td class="l">ML0006/涤纶四面弹</td><td class="l">0008/灰色</td><td></td></tr>
<tr class="hl"><td class="n">12</td><td><span class="ck"></span></td><td class="a"><svg width="7" height="12" viewBox="0 0 7 12" style="vertical-align:-7px"><path d="M0 0l7 6-7 6z" fill="#2b7fc3"/></svg></td><td>2021-08-26</td><td><span class="bd ok">已完成</span></td><td><svg width="13" height="13" viewBox="0 0 13 13" style="vertical-align:-1.5px"><path d="M2.3 2.3l8.4 8.4M10.7 2.3l-8.4 8.4" stroke="#f55555" stroke-width="3.5" stroke-linecap="round" fill="none"/></svg></td><td><svg width="13" height="13" viewBox="0 0 13 13" style="vertical-align:-1.5px"><path d="M2.3 2.3l8.4 8.4M10.7 2.3l-8.4 8.4" stroke="#f55555" stroke-width="3.5" stroke-linecap="round" fill="none"/></svg></td><td><svg width="13" height="13" viewBox="0 0 13 13" style="vertical-align:-1.5px"><path d="M2.3 2.3l8.4 8.4M10.7 2.3l-8.4 8.4" stroke="#f55555" stroke-width="3.5" stroke-linecap="round" fill="none"/></svg></td><td>2058</td><td class="l">admin2108-0052</td><td class="l g"></td><td class="l">盛虹二…</td><td>小傅厂2</td><td>跟单zz</td><td class="l">0052/75D全捻仿…</td><td class="l">0048/红色</td><td></td></tr>
<tr class="od"><td class="n">13</td><td><span class="ck"></span></td><td class="a"><svg width="7" height="12" viewBox="0 0 7 12" style="vertical-align:-7px"><path d="M0 0l7 6-7 6z" fill="#2b7fc3"/></svg></td><td>2021-08-26</td><td><span class="bd ok">已完成</span></td><td><svg width="13" height="13" viewBox="0 0 13 13" style="vertical-align:-1.5px"><path d="M2.3 2.3l8.4 8.4M10.7 2.3l-8.4 8.4" stroke="#f55555" stroke-width="3.5" stroke-linecap="round" fill="none"/></svg></td><td><svg width="13" height="13" viewBox="0 0 13 13" style="vertical-align:-1.5px"><path d="M2.3 2.3l8.4 8.4M10.7 2.3l-8.4 8.4" stroke="#f55555" stroke-width="3.5" stroke-linecap="round" fill="none"/></svg></td><td><svg width="13" height="13" viewBox="0 0 13 13" style="vertical-align:-1.5px"><path d="M2.3 2.3l8.4 8.4M10.7 2.3l-8.4 8.4" stroke="#f55555" stroke-width="3.5" stroke-linecap="round" fill="none"/></svg></td><td>10010</td><td class="l">魏川傅2108-0049</td><td class="l g"></td><td class="l">平望染厂</td><td>平隆纺织</td><td>跟单小傅</td><td class="l">0052/75D全捻仿…</td><td class="l">0048/红色</td><td></td></tr>
<tr class="ev"><td class="n">14</td><td><span class="ck"></span></td><td class="a"><svg width="7" height="12" viewBox="0 0 7 12" style="vertical-align:-7px"><path d="M0 0l7 6-7 6z" fill="#2b7fc3"/></svg></td><td>2021-08-26</td><td><span class="bd ok">已完成</span></td><td><svg width="13" height="13" viewBox="0 0 13 13" style="vertical-align:-1.5px"><path d="M2.3 2.3l8.4 8.4M10.7 2.3l-8.4 8.4" stroke="#f55555" stroke-width="3.5" stroke-linecap="round" fill="none"/></svg></td><td><svg width="13" height="13" viewBox="0 0 13 13" style="vertical-align:-1.5px"><path d="M2.3 2.3l8.4 8.4M10.7 2.3l-8.4 8.4" stroke="#f55555" stroke-width="3.5" stroke-linecap="round" fill="none"/></svg></td><td><svg width="13" height="13" viewBox="0 0 13 13" style="vertical-align:-1.5px"><path d="M2.3 2.3l8.4 8.4M10.7 2.3l-8.4 8.4" stroke="#f55555" stroke-width="3.5" stroke-linecap="round" fill="none"/></svg></td><td>10010</td><td class="l">魏川傅2108-0049</td><td class="l g"></td><td class="l">平望染厂</td><td>平隆纺织</td><td>跟单小傅</td><td class="l">0052/75D全捻仿…</td><td class="l">0048/红色</td><td></td></tr>
</table></div>

</body>
</html>
